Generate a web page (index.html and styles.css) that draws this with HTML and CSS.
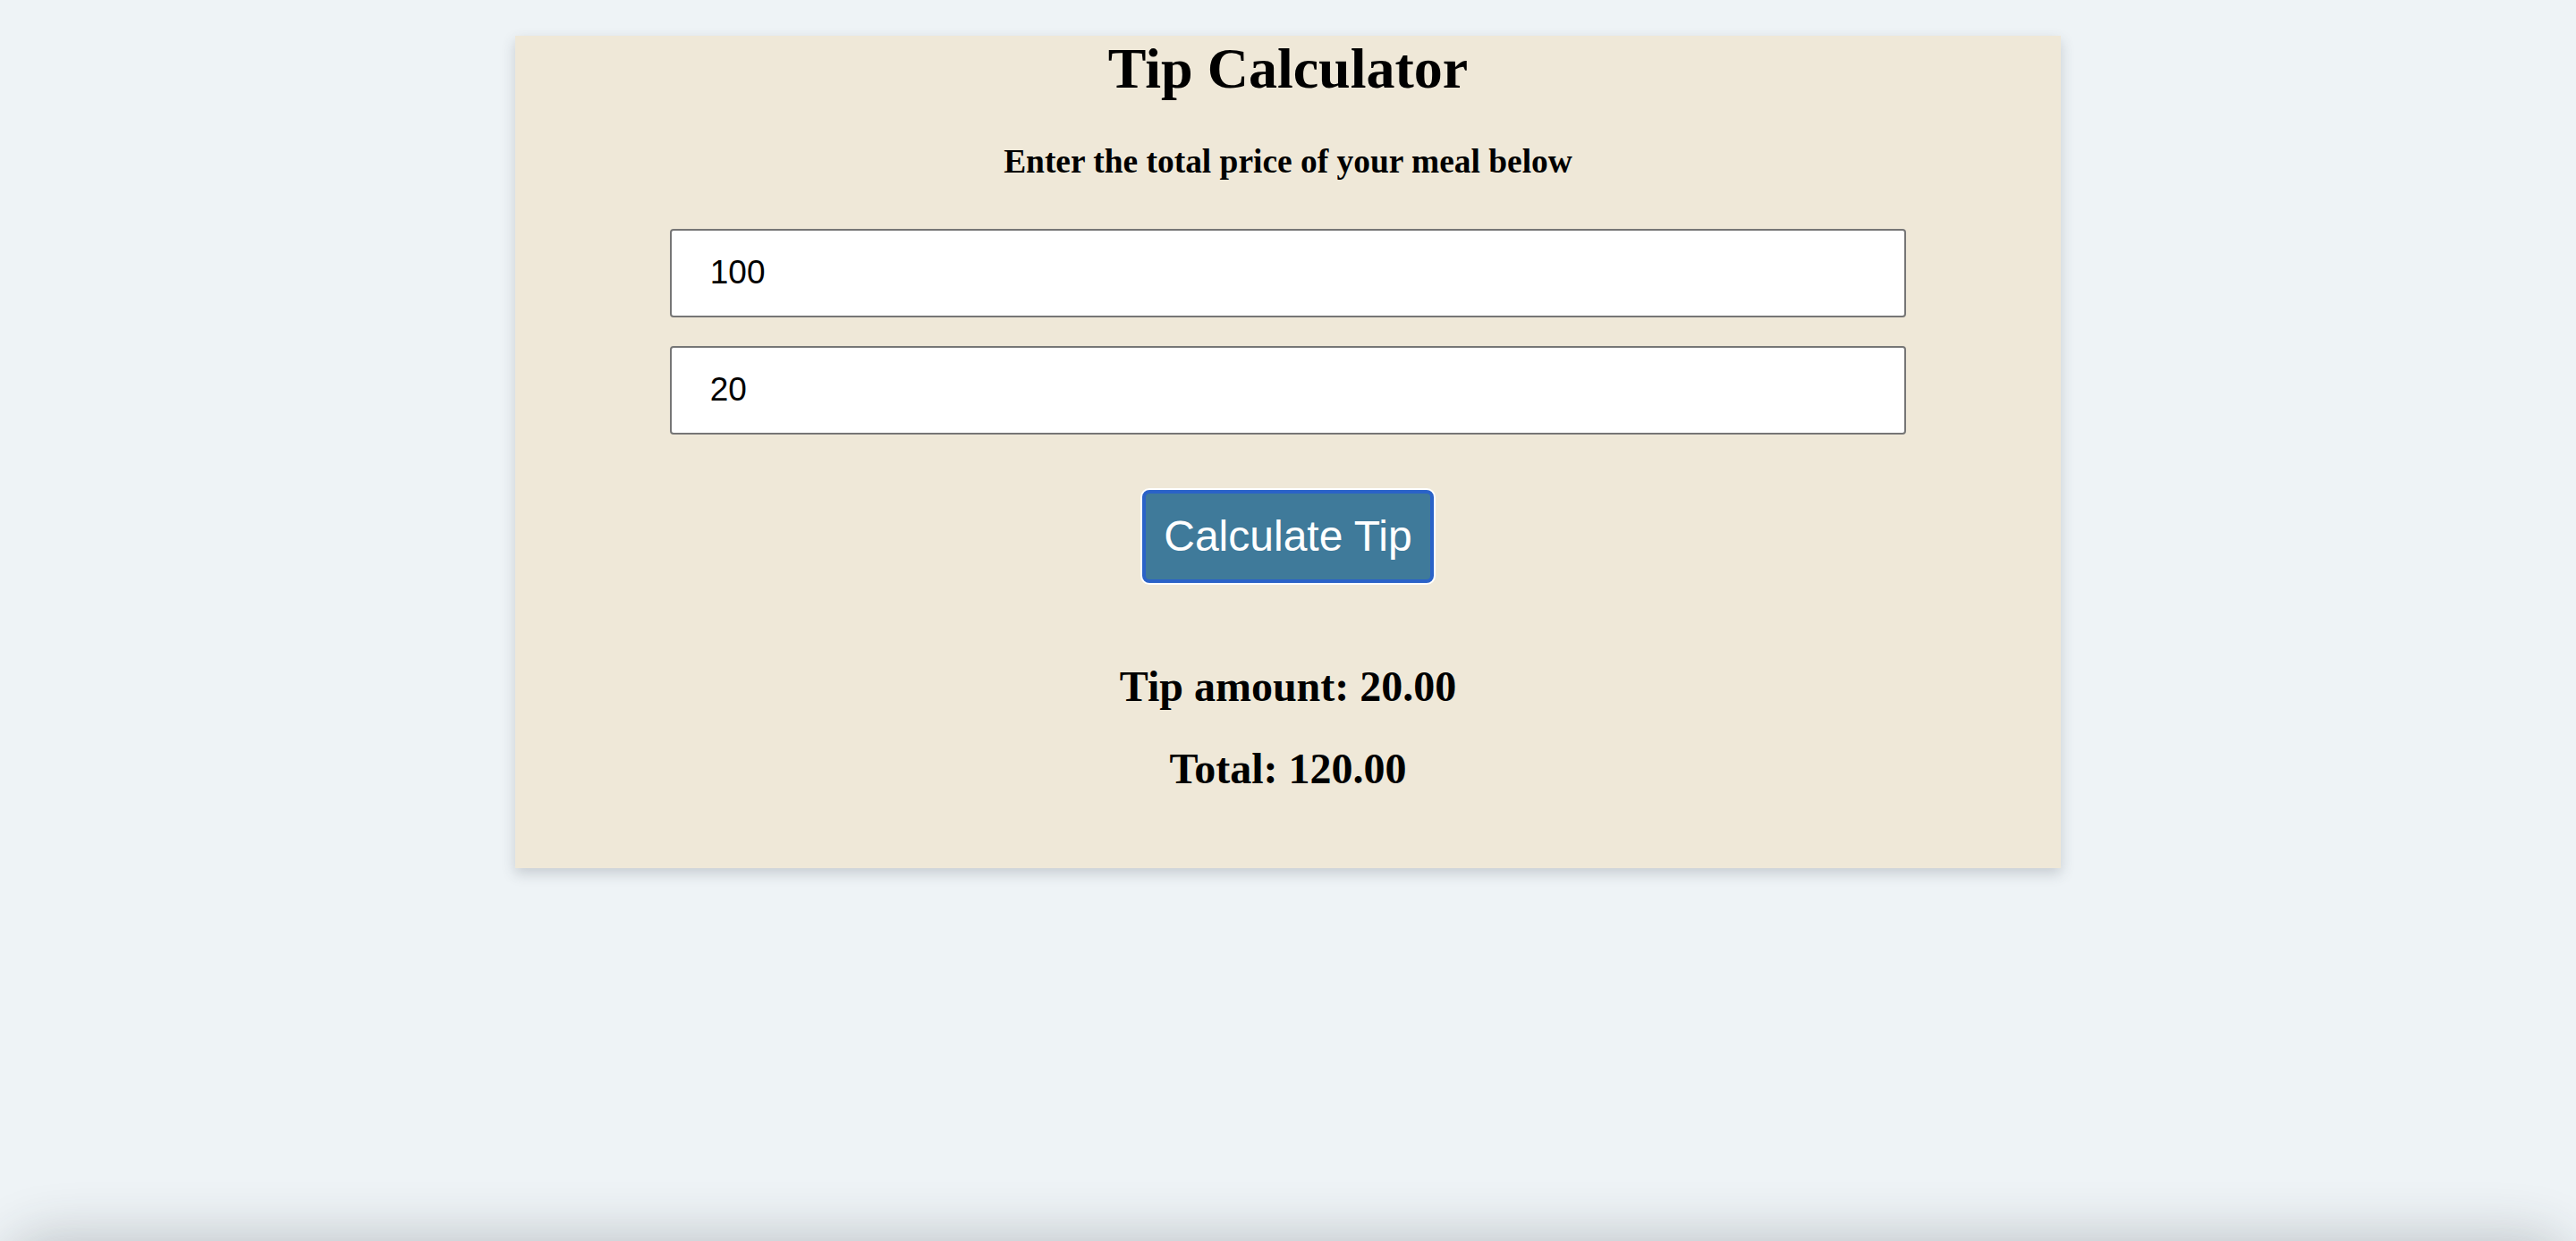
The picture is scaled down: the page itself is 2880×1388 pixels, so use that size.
FILE: index.html
```html
<!DOCTYPE html>
<html lang="en">
<head>
<meta charset="utf-8">
<title>Tip Calculator</title>
<link rel="stylesheet" href="styles.css">
</head>
<body>
<main class="card">
  <h1 class="title">Tip Calculator</h1>
  <h3 class="subtitle">Enter the total price of your meal below</h3>
  <div class="fields">
    <input class="field" type="text" value="100">
    <input class="field" type="text" value="20">
  </div>
  <button class="calc-btn" type="button">Calculate Tip</button>
  <div class="results">
    <h2 class="result">Tip amount: 20.00</h2>
    <h2 class="result">Total: 120.00</h2>
  </div>
</main>
<div class="window-edge"></div>
</body>
</html>
```

FILE: styles.css
```css
html, body {
  margin: 0;
  padding: 0;
  overflow: hidden;
}

body {
  background: #eef3f6;
  font-family: "Liberation Serif", "Times New Roman", serif;
  color: #000;
  height: 1388px;
  position: relative;
}

.card {
  width: 60%;
  margin: 40px auto 0;
  background: #efe8d8;
  box-shadow: 0 6px 14px rgba(60, 70, 80, 0.22);
  display: flex;
  flex-direction: column;
  align-items: center;
  padding: 0 0 84px;
  text-align: center;
}

.title {
  font-size: 64px;
  font-weight: bold;
  line-height: 1.15;
  margin: 0 0 45px;
}

.subtitle {
  font-size: 37.44px;
  font-weight: bold;
  line-height: 1.15;
  margin: 0 0 54px;
}

.fields {
  width: 80%;
  display: flex;
  flex-direction: column;
  gap: 32px;
}

.field {
  box-sizing: border-box;
  width: 100%;
  height: 99px;
  border: 2px solid #767676;
  border-radius: 4px;
  background: #fff;
  font-family: "Liberation Sans", Arial, sans-serif;
  font-size: 37px;
  color: #000;
  padding: 0 43px;
  outline: none;
}

.calc-btn {
  margin-top: 62px;
  box-sizing: border-box;
  height: 104px;
  padding: 0 20px;
  background: #3f7a9a;
  color: #fff;
  border: 4px solid #2a62c8;
  border-radius: 8px;
  box-shadow: 0 0 0 2px #fff;
  font-family: "Liberation Sans", Arial, sans-serif;
  font-size: 48px;
  line-height: 1;
  cursor: pointer;
}

.results {
  margin-top: 88px;
  display: flex;
  flex-direction: column;
  gap: 37px;
}

.result {
  font-size: 48px;
  font-weight: bold;
  line-height: 1.15;
  margin: 0;
}

.window-edge {
  position: absolute;
  left: 0;
  right: 0;
  bottom: 0;
  height: 90px;
  overflow: hidden;
  pointer-events: none;
}

.window-edge::after {
  content: "";
  position: absolute;
  left: 0;
  right: 0;
  top: 90px;
  height: 120px;
  border-radius: 140px;
  box-shadow: 0 -6px 60px rgba(40, 50, 60, 0.24);
}
```
